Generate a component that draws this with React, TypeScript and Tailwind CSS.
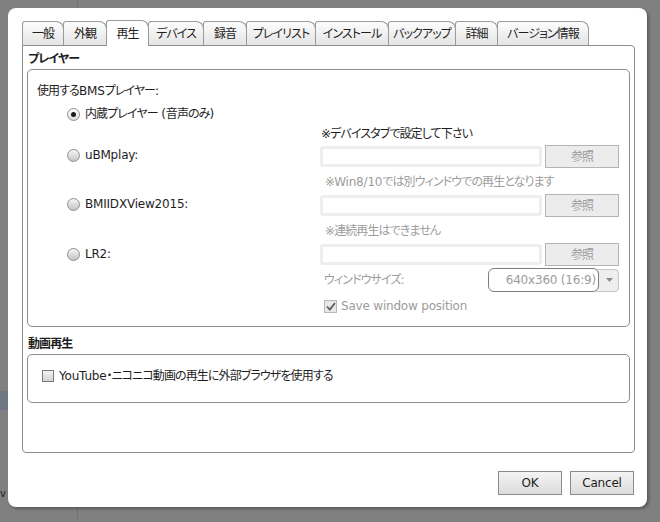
import clsx from "clsx";

const font =
  "font-['DejaVu_Sans','Noto_Sans_CJK_JP',sans-serif] [font-feature-settings:'palt'] tracking-[-0.2px]";

// Japanese runs are set a bit tighter than the Latin ones
const T = ({ children }: { children: string }) => (
  <>
    {children.split(/([\u203b\u3000-\u9fff\uff00-\uffef]+)/).map((part, i) =>
      i % 2 ? (
        <span key={i} className="tracking-[-0.9px]">
          {part}
        </span>
      ) : (
        part
      )
    )}
  </>
);

const tabs = [
  { label: "一般", w: "w-[42px]" },
  { label: "外観", w: "w-[44px]" },
  { label: "再生", w: "w-[43px]", active: true },
  { label: "デバイス", w: "w-[56px]" },
  { label: "録音", w: "w-[44px]" },
  { label: "プレイリスト", w: "w-[70px]" },
  { label: "インストール", w: "w-[74px]" },
  { label: "バックアップ", w: "w-[68px]" },
  { label: "詳細", w: "w-[43px]" },
  { label: "バージョン情報", w: "w-[92px]" },
];

const Radio = ({ checked }: { checked?: boolean }) => (
  <span
    className={clsx(
      "flex h-[13px] w-[13px] shrink-0 items-center justify-center rounded-full border border-[#8f8f8f]",
      checked
        ? "bg-linear-to-b from-[#ffffff] to-[#dcdcdc]"
        : "bg-linear-to-b from-[#f6f6f6] to-[#c4c4c4]"
    )}
  >
    {checked && <span className="h-[5px] w-[5px] rounded-full bg-[#1a1a1a]" />}
  </span>
);

const PathRow = () => (
  <div className="flex h-[23px] items-center gap-[3px]">
    <div className="h-[21px] w-[222px] rounded-[3px] border-[3px] border-[#eeeeee] bg-white" />
    <div className="flex h-[23px] w-[74px] items-center justify-center border border-[#b4b4b4] bg-[#ececec] text-[12px] text-[#9c9c9c]">
      <T>参照</T>
    </div>
  </div>
);

const Option = ({ label, checked }: { label: string; checked?: boolean }) => (
  <div className="flex items-center gap-[5px] pl-[39px] leading-[14px]">
    <Radio checked={checked} />
    <span>
      <T>{label}</T>
    </span>
  </div>
);

export default function App() {
  return (
    <div className={clsx("relative h-[522px] w-[660px] overflow-hidden bg-[#808080] text-[12px] text-[#1e1e1e]", font)}>
      {/* page behind the dialog */}
      <div className="flex h-full">
        <div className="flex w-[78px] flex-col border-r border-[#737373]">
          <div className="mt-[391px] h-[19px] w-[9px] bg-[#6f7784]" />
          <span className="mt-[78px] text-[10px] leading-[12px] text-[#222]">v</span>
        </div>
      </div>

      {/* settings dialog */}
      <div className="absolute left-[8px] top-[8px] flex h-[499px] w-[639px] flex-col rounded-[8px] bg-white pl-[14px] pr-[12px] pt-[12px] shadow-[2px_2px_3px_rgba(0,0,0,0.3)]">
        <div className="flex h-[25px] items-end">
          {tabs.map((t, i) => (
            <div
              key={t.label}
              className={clsx(
                "flex items-center justify-center rounded-tl-[3px] rounded-tr-[8px] border border-b-0 border-[#9a9a9a] leading-[14px]",
                t.w,
                i > 0 && "-ml-px",
                t.active
                  ? "relative z-10 -mb-px h-[26px] bg-white"
                  : "h-[24px] bg-linear-to-b from-[#fdfdfd] to-[#e4e4e4]"
              )}
            >
              <T>{t.label}</T>
            </div>
          ))}
        </div>

        <div className="flex h-[408px] w-[613px] flex-col rounded-b-[4px] rounded-tr-[4px] border border-[#8c8c8c]">
          <div className="pl-[5px] pt-[6px] font-bold leading-[14px]">
            <T>プレイヤー</T>
          </div>
          <div className="mx-[4px] mt-[3px] flex h-[258px] flex-col rounded-[5px] border border-[#8c8c8c]">
            <div className="pl-[9px] pt-[14px] leading-[14px]">
              <T>使用するBMSプレイヤー:</T>
            </div>
            <div className="mt-[9px]">
              <Option label="内蔵プレイヤー (音声のみ)" checked />
            </div>

            <div className="mt-[6px] pl-[293px] leading-[14px]">
              <T>※デバイスタブで設定して下さい</T>
            </div>
            <div className="mt-[4px] flex">
              <div className="w-[292px] pt-[3px]">
                <Option label="uBMplay:" />
              </div>
              <PathRow />
            </div>

            <div className="mt-[7px] pl-[297px] leading-[14px] text-[#9c9c9c]">
              <T>※Win8/10では別ウィンドウでの再生となります</T>
            </div>
            <div className="mt-[5px] flex">
              <div className="w-[292px] pt-[3px]">
                <Option label="BMIIDXView2015:" />
              </div>
              <PathRow />
            </div>

            <div className="mt-[7px] pl-[297px] leading-[14px] text-[#9c9c9c]">
              <T>※連続再生はできません</T>
            </div>
            <div className="mt-[5px] flex">
              <div className="w-[292px] pt-[4px]">
                <Option label="LR2:" />
              </div>
              <PathRow />
            </div>

            <div className="ml-[292px] mt-[2px] flex h-[24px] w-[299px] items-center">
              <span className="flex-1 pl-[4px] text-[#9c9c9c]">
                <T>ウィンドウサイズ:</T>
              </span>
              <div className="relative z-10 flex h-[24px] w-[111px] items-center justify-end rounded-[6px] border border-[#7c7c7c] bg-white pr-[2px] text-[#9c9c9c]">
                640x360 (16:9)
              </div>
              <div className="-ml-[3px] flex h-[23px] w-[23px] items-center justify-center rounded-r-[4px] border border-[#c6c6c6] bg-[#eeeeee] pl-[3px]">
                <svg width="7" height="4" viewBox="0 0 7 4">
                  <path d="M0 0h7L3.5 4z" fill="#8a8a8a" />
                </svg>
              </div>
            </div>

            <div className="ml-[296px] mt-[7px] flex items-center gap-[4px] leading-[14px] text-[#9c9c9c]">
              <span className="flex h-[13px] w-[13px] items-center justify-center border border-[#b8b8b8] bg-[#e8e8e8]">
                <svg width="10" height="9" viewBox="0 0 10 9">
                  <path d="M1 4.5l2.8 3L9 1" fill="none" stroke="#5e5e5e" strokeWidth="1.8" />
                </svg>
              </span>
              <span>Save window position</span>
            </div>
          </div>

          <div className="mt-[10px] pl-[5px] font-bold leading-[14px]">
            <T>動画再生</T>
          </div>
          <div className="mx-[4px] mt-[3px] h-[49px] rounded-[5px] border border-[#8c8c8c] pl-[14px] pt-[14px]">
            <div className="flex items-center gap-[5px] leading-[14px]">
              <span className="h-[12px] w-[12px] border border-[#7a7a7a] bg-linear-to-b from-[#f4f4f4] to-[#d4d4d4]" />
              <span>
                <T>YouTube・ニコニコ動画の再生に外部ブラウザを使用する</T>
              </span>
            </div>
          </div>
        </div>

        <div className="mr-[1px] mt-[18px] flex justify-end gap-[8px]">
          {["OK", "Cancel"].map((b) => (
            <div
              key={b}
              className="flex h-[24px] w-[64px] items-center justify-center border border-[#8a8a8a] bg-linear-to-b from-[#f4f4f4] to-[#dcdcdc] leading-[14px]"
            >
              {b}
            </div>
          ))}
        </div>
      </div>
    </div>
  );
}
